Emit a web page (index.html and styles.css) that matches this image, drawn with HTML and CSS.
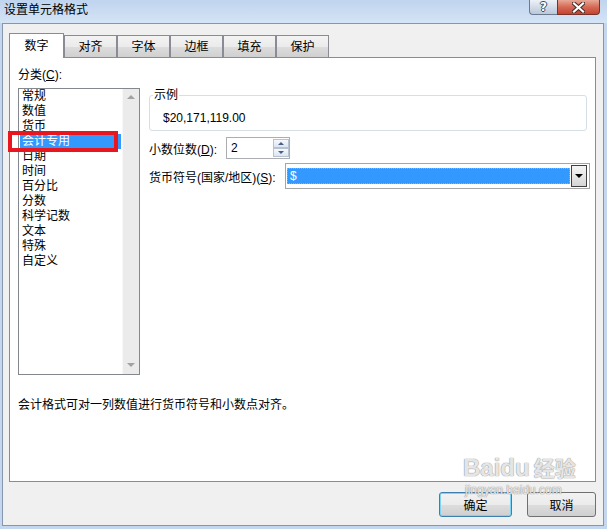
FILE: index.html
```html
<!DOCTYPE html>
<html lang="zh-CN">

<head>
    <meta charset="UTF-8">
    <meta name="viewport" content="width=device-width, initial-scale=1.0">
    <title>设置单元格格式</title>
    <link rel="stylesheet" href="styles.css">
</head>

<body>
    <div class="window">

        <!-- Barra de título -->
        <div class="titlebar">
            <span class="title">设置单元格格式</span>
            <div class="caption-buttons">
                <span class="btn-help">?</span>
                <span class="btn-close">
                    <svg width="13" height="11" viewBox="0 0 13 11">
                        <path d="M2 1.5 L11 9.5 M11 1.5 L2 9.5" stroke="#4a2a25" stroke-width="4.2" stroke-linecap="square" fill="none"/>
                        <path d="M2 1.5 L11 9.5 M11 1.5 L2 9.5" stroke="#ffffff" stroke-width="2.2" stroke-linecap="square" fill="none"/>
                    </svg>
                </span>
            </div>
        </div>

        <div class="client">
            <ul class="tabs">
                <li class="tab active">数字</li>
                <li class="tab">对齐</li>
                <li class="tab">字体</li>
                <li class="tab">边框</li>
                <li class="tab">填充</li>
                <li class="tab">保护</li>
            </ul>

            <div class="panel">
                <div class="panel-main">
                    <!-- Lista de categorías -->
                    <div class="category">
                        <div class="field-label">分类(<u>C</u>):</div>
                        <div class="listbox">
                            <ul class="list-items">
                                <li>常规</li>
                                <li>数值</li>
                                <li>货币</li>
                                <li class="selected">会计专用</li>
                                <li>日期</li>
                                <li>时间</li>
                                <li>百分比</li>
                                <li>分数</li>
                                <li>科学记数</li>
                                <li>文本</li>
                                <li>特殊</li>
                                <li>自定义</li>
                            </ul>
                            <div class="scrollbar">
                                <span class="arrow-up"></span>
                                <span class="arrow-down"></span>
                            </div>
                            <div class="highlight-box"></div>
                        </div>
                    </div>

                    <!-- Opciones de formato -->
                    <div class="format">
                        <fieldset class="sample">
                            <legend>示例</legend>
                            <div class="sample-value">$20,171,119.00</div>
                        </fieldset>

                        <div class="form-row decimals">
                            <label>小数位数(<u>D</u>):</label>
                            <div class="spin">
                                <span class="spin-value">2</span>
                                <div class="spin-buttons">
                                    <span class="spin-up"><i class="tri-up"></i></span>
                                    <span class="spin-down"><i class="tri-down"></i></span>
                                </div>
                            </div>
                        </div>

                        <div class="form-row currency">
                            <label>货币符号(国家/地区)(<u>S</u>):</label>
                            <div class="combo">
                                <span class="combo-value">$</span>
                                <span class="combo-arrow"><i class="tri-combo"></i></span>
                            </div>
                        </div>
                    </div>
                </div>

                <p class="description">会计格式可对一列数值进行货币符号和小数点对齐。</p>
            </div>

            <div class="dialog-buttons">
                <button class="btn default">确定</button>
                <button class="btn">取消</button>
            </div>

            <!-- Marca de agua -->
            <div class="watermark">
                <div class="wm-logo">Baidu<span class="wm-cn">经验</span></div>
                <div class="wm-url">jingyan.baidu.com</div>
            </div>
        </div>
    </div>
</body>

</html>
```

FILE: styles.css
```css
/* Estilos generales */
* {
    box-sizing: border-box;
}

body {
    margin: 0;
    width: 607px;
    height: 529px;
    overflow: hidden;
    background-color: #c4d7ee;
    font-family: "Liberation Sans", "Noto Sans CJK SC", sans-serif;
    font-size: 12px;
    color: #000;
}

u {
    text-decoration: underline;
}

/* Barra de título */
.titlebar {
    display: flex;
    height: 23px;
    background: linear-gradient(#bfd4ee, #d5e4f6);
}

.title {
    padding-left: 4px;
    line-height: 20px;
}

.caption-buttons {
    display: flex;
    height: 15px;
    margin-left: auto;
    margin-right: 7px;
}

.btn-help {
    width: 28px;
    border: 1px solid #6b7b90;
    border-top: none;
    border-right: none;
    border-radius: 0 0 0 4px;
    background: linear-gradient(#eef2f8, #d3dce8 50%, #bac8da);
    color: #fff;
    font-family: "DejaVu Sans", sans-serif;
    font-weight: bold;
    font-size: 12px;
    line-height: 14px;
    text-align: center;
    text-shadow: 1px 0 0 #3b4a5e, -1px 0 0 #3b4a5e, 0 1px 0 #3b4a5e, 0 -1px 0 #3b4a5e;
}

.btn-close {
    display: flex;
    align-items: center;
    justify-content: center;
    width: 43px;
    border: 1px solid #7a3228;
    border-top: none;
    border-radius: 0 0 4px 0;
    background: linear-gradient(#e8a896, #d56a55 50%, #c4432f);
}

/* Área cliente */
.client {
    position: relative;
    height: 503px;
    margin: 0 3px 0 2px;
    padding: 9px 7px 0 6px;
    border: 1px solid #8497ad;
    background-color: #f0f0f0;
}

/* Pestañas */
.tabs {
    display: flex;
    align-items: flex-end;
    height: 24px;
    margin: 0;
    padding: 0;
    list-style: none;
}

.tab {
    width: 53px;
    height: 22px;
    padding-top: 1px;
    border: 1px solid #898c95;
    border-bottom: none;
    background: linear-gradient(#f3f3f3, #ebebeb 50%, #dddddd 51%, #d0d0d0);
    text-align: center;
    line-height: 20px;
}

.tab.active {
    position: relative;
    z-index: 1;
    width: 55px;
    height: 25px;
    margin-bottom: -1px;
    background: #fff;
    line-height: 22px;
}

/* Panel principal */
.panel {
    height: 425px;
    padding: 9px 8px 0;
    border: 1px solid #898c95;
    background-color: #fff;
}

.panel-main {
    display: flex;
    align-items: flex-start;
}

.category {
    flex-shrink: 0;
    width: 122px;
}

.field-label {
    line-height: 16px;
    margin-bottom: 5px;
}

.listbox {
    position: relative;
    display: flex;
    height: 287px;
    border: 1px solid #828790;
}

.list-items {
    flex: 1;
    margin: 0;
    padding: 0;
    list-style: none;
}

.list-items li {
    height: 15px;
    margin: 0 1px;
    padding-left: 2px;
    line-height: 15px;
}

.list-items li.selected {
    background-color: #3399ff;
    color: #fff;
}

.scrollbar {
    display: flex;
    flex-direction: column;
    justify-content: space-between;
    align-items: center;
    width: 17px;
    padding: 6px 0 7px;
    border-left: 1px solid #f7f7f7;
    background-color: #ebebeb;
}

.arrow-up {
    border-left: 4px solid transparent;
    border-right: 4px solid transparent;
    border-bottom: 4px solid #a2a2a2;
}

.arrow-down {
    border-left: 4px solid transparent;
    border-right: 4px solid transparent;
    border-top: 4px solid #a2a2a2;
}

.highlight-box {
    position: absolute;
    left: -11px;
    top: 42px;
    width: 110px;
    height: 21px;
    border: 4px solid #e8161f;
}

/* Columna de formato */
.format {
    flex: 1;
    min-width: 0;
    margin-left: 9px;
    margin-top: 20px;
}

.sample {
    min-width: 0;
    margin: 0;
    padding: 0 0 4px 3px;
    border: 1px solid #d5dfe5;
    border-radius: 3px;
}

.sample legend {
    padding: 0 1px;
    line-height: 16px;
}

.sample-value {
    margin-top: 7px;
    padding-left: 10px;
    line-height: 16px;
}

.form-row {
    display: flex;
    align-items: center;
}

.form-row label {
    flex-shrink: 0;
}

.decimals {
    margin-top: 6px;
}

.decimals label {
    width: 77px;
}

.spin {
    display: flex;
    width: 64px;
    height: 22px;
    border: 1px solid #abadb3;
    background-color: #fff;
}

.spin-value {
    flex: 1;
    padding-left: 4px;
    line-height: 20px;
}

.spin-buttons {
    display: flex;
    flex-direction: column;
    width: 16px;
    margin: 1px 0;
}

.spin-up,
.spin-down {
    display: flex;
    flex: 1;
    align-items: center;
    justify-content: center;
    border: 1px solid #b6c2d2;
    background: linear-gradient(#f6f9fd, #dbe5f2);
}

.tri-up {
    border-left: 3px solid transparent;
    border-right: 3px solid transparent;
    border-bottom: 3px solid #4d5f80;
}

.tri-down {
    border-left: 3px solid transparent;
    border-right: 3px solid transparent;
    border-top: 3px solid #4d5f80;
}

.currency {
    margin-top: 4px;
}

.currency label {
    width: 136px;
}

.combo {
    display: flex;
    flex-shrink: 0;
    align-items: center;
    width: 305px;
    height: 26px;
    padding: 1px 2px 1px 1px;
    border: 1px solid #a5a5a5;
    background-color: #fff;
}

.combo-value {
    flex: 1;
    height: 16px;
    margin-right: 1px;
    padding-left: 3px;
    background-color: #3399ff;
    color: #fff;
    line-height: 16px;
    outline: 1px dotted #d9a066;
    outline-offset: -1px;
}

.combo-arrow {
    display: flex;
    align-items: center;
    justify-content: center;
    width: 16px;
    height: 22px;
    border: 1px solid #3f3f3f;
    background: linear-gradient(#f4f4f4, #e6e6e6 50%, #d4d4d4);
}

.tri-combo {
    border-left: 4px solid transparent;
    border-right: 4px solid transparent;
    border-top: 4px solid #000;
}

.description {
    margin: 22px 0 0;
    line-height: 16px;
}

/* Botones del diálogo */
.dialog-buttons {
    display: flex;
    justify-content: flex-end;
    gap: 15px;
    margin-top: 10px;
}

.btn {
    width: 69px;
    height: 25px;
    padding: 0;
    border: 1px solid #707070;
    border-radius: 3px;
    background: linear-gradient(#f2f2f2, #ebebeb 50%, #dddddd 51%, #cfcfcf);
    font: inherit;
    color: #000;
}

.btn.default {
    width: 73px;
    border-color: #3c7fb1;
    box-shadow: inset 0 0 0 1px #7fd3f5;
}

/* Marca de agua */
.watermark {
    position: absolute;
    left: 460px;
    top: 428px;
    color: rgba(255, 255, 255, 0.8);
    text-shadow: 0 0 1px #8c8c8c, 0 0 1px #8c8c8c;
    pointer-events: none;
}

.wm-logo {
    font-family: "Liberation Sans", sans-serif;
    font-weight: bold;
    font-size: 24px;
    line-height: 30px;
}

.wm-cn {
    margin-left: 4px;
    font-family: "Noto Sans CJK SC", sans-serif;
    font-size: 21px;
}

.wm-url {
    margin-top: 1px;
    margin-left: 2px;
    font-size: 12px;
    line-height: 12px;
}
```
